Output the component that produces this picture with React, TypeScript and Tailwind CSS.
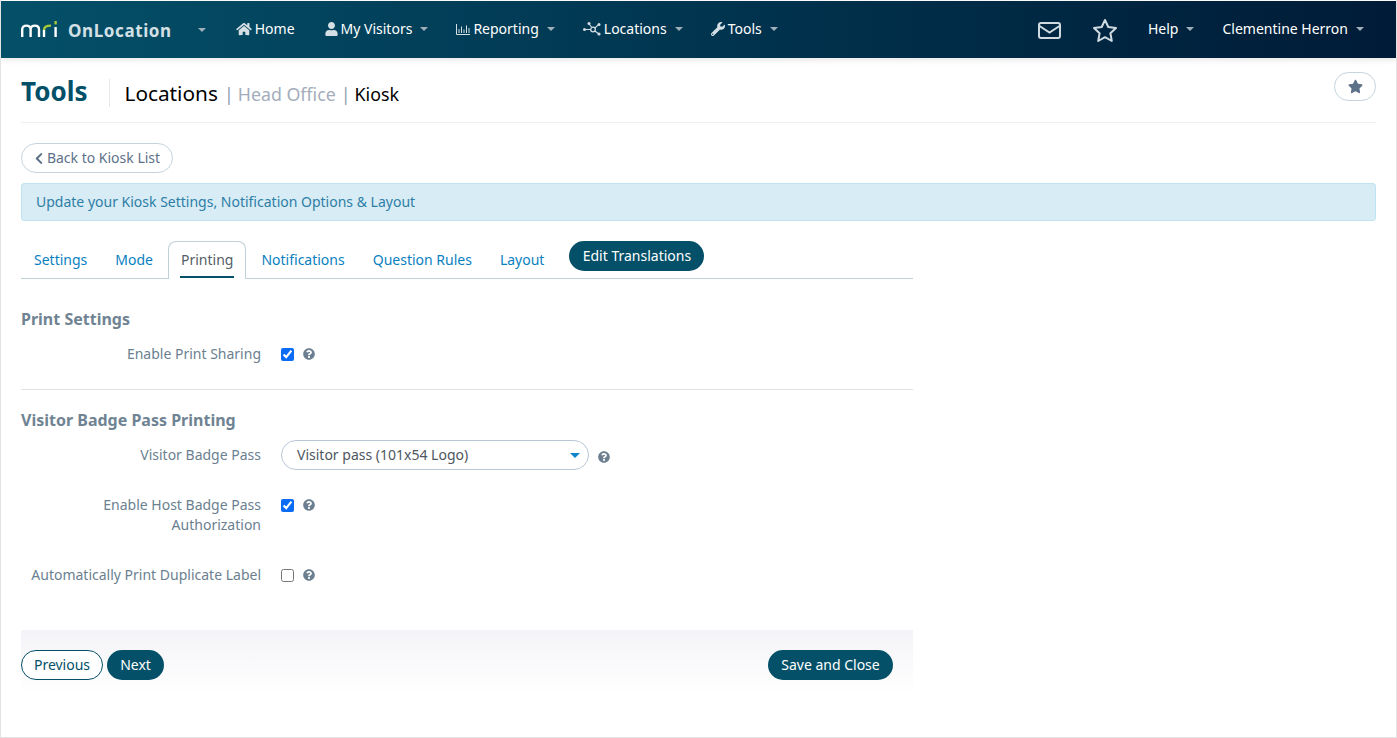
import React from 'react';
import { FaHome, FaUser, FaWrench, FaChevronLeft, FaStar, FaQuestionCircle } from 'react-icons/fa';

const Caret = ({ className = 'border-x-[4px] border-t-[4px] border-t-[#9fb0bb]' }: { className?: string }) => (
  <span className={`inline-block w-0 h-0 border-x-transparent ${className}`}></span>
);

// MRI logo
const Logo = () => (
  <svg width="37" height="16" viewBox="0 0 37 16" fill="none" strokeWidth="2.4">
    <path d="M1.2 16V8.5C1.2 5.8 3 4.6 5.3 4.6S9.6 5.8 9.6 8.5V16M9.6 8.5C9.6 5.8 11.6 4.6 13.8 4.6S18 5.8 18 8.5V16" stroke="#ffffff" />
    <path d="M23 16V9" stroke="#ffffff" />
    <path d="M23 9C23 6 25 4.6 30 4.6" stroke="#a4c93a" />
    <path d="M34.6 16V6" stroke="#ffffff" />
    <path d="M34.6 3.4V0" stroke="#a4c93a" />
  </svg>
);

const ChartIcon = () => (
  <svg width="14" height="12" viewBox="0 0 14 12" fill="none" stroke="currentColor" strokeWidth="1">
    <path d="M0.5 1V11.5H14M3 10V6M5.5 10V3.5M8 10V6.5M10.5 10V2.5M13 10V5" />
  </svg>
);

const NodesIcon = () => (
  <svg width="18" height="14" viewBox="0 0 18 14" fill="currentColor">
    <circle cx="1.5" cy="7.5" r="1.5" />
    <circle cx="6" cy="1.5" r="1.5" />
    <circle cx="10" cy="7.5" r="2.3" fill="none" stroke="currentColor" strokeWidth="1.3" />
    <circle cx="16" cy="2.5" r="1.5" />
    <circle cx="16" cy="12" r="1.6" />
    <path d="M3 7.5H7.7M6.5 2.5L8.8 5.5M11.8 6L15 3.2M11.8 9L15 11.3" stroke="currentColor" strokeWidth="1.1" fill="none" />
  </svg>
);

const EnvelopeIcon = () => (
  <svg width="23" height="17" viewBox="0 0 23 17" fill="none" stroke="#cfdbe1" strokeWidth="2">
    <rect x="1" y="1" width="21" height="15" rx="2" />
    <path d="M1.5 4L11.5 10.5L21.5 4" />
  </svg>
);

const StarOutline = () => (
  <svg width="26" height="25" viewBox="0 0 26 25" fill="none" stroke="#cfdbe1" strokeWidth="2" strokeLinejoin="round">
    <path d="M13 2L16.3 9L24 10L18.4 15.3L19.8 23L13 19.2L6.2 23L7.6 15.3L2 10L9.7 9Z" />
  </svg>
);

const NavItem = ({ icon, label }: { icon?: React.ReactNode; label: string }) => (
  <div className="flex items-center gap-[3px] text-white text-sm">
    {icon && <span className="text-[#d5dfe4] flex items-center">{icon}</span>}
    <span>{label}</span>
    {label !== 'Home' && <span className="ml-[5px] flex items-center"><Caret /></span>}
  </div>
);

const Help = () => <FaQuestionCircle className="text-[#6b7f90] w-[12px] h-[12px] shrink-0" />;

const Check = ({ checked }: { checked?: boolean }) => (
  <input
    type="checkbox"
    defaultChecked={checked}
    className="w-[13px] h-[13px] m-0 shrink-0 accent-[#0a6cf5]"
  />
);

const Label = ({ children }: { children: React.ReactNode }) => (
  <div className="w-[240px] shrink-0 text-right text-sm leading-5 text-[#6b7f90]">{children}</div>
);

const tabs = ['Settings', 'Mode', 'Printing', 'Notifications', 'Question Rules', 'Layout'];

export default function App() {
  return (
    <div className="h-[738px] w-[1397px] overflow-hidden bg-white border-x border-b border-[#e3e3e3] font-['Noto_Sans',sans-serif] flex flex-col">
      <header className="mt-px h-[57px] shrink-0 flex items-center bg-gradient-to-r from-[#055069] to-[#001b37] shadow-[0_2px_6px_rgba(0,0,0,0.1)] relative">
        <div className="ml-5 flex items-center">
          <span className="flex mt-[-2px]"><Logo /></span>
          <span className="ml-[10px] mt-[2px] text-[17px] font-bold tracking-[0.6px] text-[#d3e0e5]">OnLocation</span>
          <span className="ml-[26px] flex items-center"><Caret /></span>
        </div>
        <nav className="ml-[30px] mb-[2px] flex items-center gap-7">
          <NavItem icon={<FaHome className="w-[16px] h-[14px]" />} label="Home" />
          <span className="ml-[2px]"><NavItem icon={<FaUser className="w-[13px] h-[14px]" />} label="My Visitors" /></span>
          <NavItem icon={<ChartIcon />} label="Reporting" />
          <NavItem icon={<NodesIcon />} label="Locations" />
          <NavItem icon={<FaWrench className="w-[14px] h-[14px]" />} label="Tools" />
        </nav>
        <div className="ml-auto mr-[32px] flex items-center">
          <span className="flex mt-[2px]"><EnvelopeIcon /></span>
          <span className="ml-[31px] flex mt-[2px]"><StarOutline /></span>
          <span className="ml-[30px] mb-[2px]"><NavItem label="Help" /></span>
          <span className="ml-[28px] mb-[2px]"><NavItem label="Clementine Herron" /></span>
        </div>
      </header>

      <main className="px-5 flex-1 flex flex-col">
        <div className="h-[65px] shrink-0 border-b border-[#eeeeee] flex items-start relative">
          <div className="mt-[17px] flex items-start">
            <h1 className="mt-[4px] h-[28px] text-[26px] leading-[24px] font-bold text-[#045069] pr-[22px] border-r border-[#e8e8e8]">Tools</h1>
            <div className="ml-[14px] flex items-baseline text-[17.8px] leading-[36px]">
              <span className="text-[20.8px] text-black">Locations</span>
              <span className="ml-[6px] text-[#8fa1b3]">|</span>
              <span className="ml-[4px] text-[#a3adbb]">Head Office</span>
              <span className="ml-[5px] text-[#8fa1b3]">|</span>
              <span className="ml-[4px] text-black">Kiosk</span>
            </div>
          </div>
          <button className="ml-auto mt-[14px] w-[42px] h-[29px] rounded-full border border-[#c5d4dc] bg-white flex items-center justify-center">
            <FaStar className="w-[15px] h-[15px] text-[#5d7288]" />
          </button>
        </div>

        <div className="mt-5">
          <button className="h-[30px] w-[152px] rounded-full border border-[#c5d4dc] bg-white flex items-center justify-center gap-[3px] text-sm text-[#5d7288]">
            <FaChevronLeft className="w-[10px] h-[13px]" />
            Back to Kiosk List
          </button>
        </div>

        <div className="mt-[10px] h-[38px] rounded-[3px] border border-[#bfe3f0] bg-[#d8ecf5] px-[14px] flex items-center text-sm text-[#2d7ea6]">
          Update your Kiosk Settings, Notification Options &amp; Layout
        </div>

        <div className="w-[892px]">
          <div className="mt-5 h-[38px] flex items-start border-b border-[#c0d0d9]">
            {tabs.map((tab, i) =>
              tab === 'Printing' ? (
                <div key={tab} className="h-[38px] px-[11px] ml-[1px] mr-[1px] rounded-t-lg border border-b-0 border-[#c0d0d9] bg-white flex flex-col items-center">
                  <span className="pt-[8px] leading-5 text-sm text-[#555e66] border-b-2 border-[#045069] h-[36px] px-px">{tab}</span>
                </div>
              ) : (
                <div key={tab} className={`h-[37px] flex items-center pt-[1px] text-sm text-[#0a7fbf] ${i === 0 ? 'pl-[13px] pr-[14px]' : 'px-[14px]'}`}>{tab}</div>
              )
            )}
            <button className="ml-[11px] h-[30px] w-[135px] rounded-full bg-[#045069] text-sm text-white flex items-center justify-center">Edit Translations</button>
          </div>

          <h2 className="mt-[28px] text-base leading-[24px] font-bold text-[#6f8393]">Print Settings</h2>
          <div className="mt-[13px] h-5 flex items-center">
            <Label>Enable Print Sharing</Label>
            <span className="ml-5 flex"><Check checked /></span>
            <span className="ml-[9px]"><Help /></span>
          </div>

          <div className="mt-[25px] border-t border-[#dfe3e6]"></div>

          <h2 className="mt-[18px] text-base leading-[24px] font-bold text-[#6f8393]">Visitor Badge Pass Printing</h2>
          <div className="mt-[8px] h-[30px] flex items-center">
            <Label>Visitor Badge Pass</Label>
            <div className="ml-5 w-[308px] h-[30px] rounded-full border border-[#b8c6d6] bg-white pl-[15px] pr-[8px] flex items-center justify-between text-sm text-[#4d5760]">
              Visitor pass (101x54 Logo)
              <Caret className="border-x-[5px] border-t-[5px] border-t-[#0a86c9]" />
            </div>
            <span className="ml-[9px] mt-[3px]"><Help /></span>
          </div>

          <div className="mt-[25px] flex items-start">
            <Label>Enable Host Badge Pass Authorization</Label>
            <div className="h-5 flex items-center">
              <span className="ml-5 flex"><Check checked /></span>
              <span className="ml-[9px]"><Help /></span>
            </div>
          </div>

          <div className="mt-[30px] h-5 flex items-center">
            <Label>Automatically Print Duplicate Label</Label>
            <span className="ml-5 flex"><Check /></span>
            <span className="ml-[9px]"><Help /></span>
          </div>

          <div className="mt-[45px] h-[65px] pt-5 pr-5 flex items-start bg-gradient-to-b from-[#f4f4f8] to-white">
            <button className="h-[30px] w-[82px] rounded-full border border-[#045069] bg-white text-sm text-[#045069]">Previous</button>
            <button className="ml-1 h-[30px] w-[57px] rounded-full bg-[#045069] text-sm text-white">Next</button>
            <button className="ml-auto h-[30px] w-[125px] rounded-full bg-[#045069] text-sm text-white">Save and Close</button>
          </div>
        </div>
      </main>
    </div>
  );
}
